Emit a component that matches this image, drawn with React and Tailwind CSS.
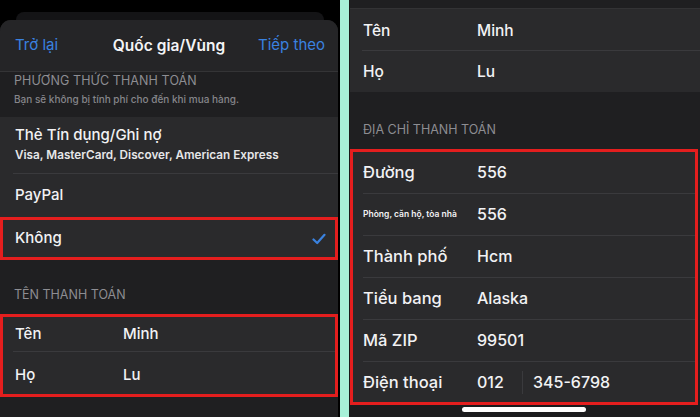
import React from "react";

const Check = () => (
  <svg width="14" height="12" viewBox="0 0 14 12" fill="none">
    <path d="M1.5 6.5 L5.2 10 L12.5 1.8" stroke="#3a82e0" strokeWidth="2.2" strokeLinecap="round" strokeLinejoin="round" />
  </svg>
);

export default function App() {
  return (
    <div className="w-[700px] h-[417px] flex bg-black overflow-hidden font-['Inter','Noto_Sans',sans-serif] antialiased">
      {/* LEFT PHONE */}
      <div className="w-[340px] h-full flex flex-col bg-black">
        <div className="h-[12px] shrink-0" />
        <div className="mx-[16px] h-[8px] shrink-0 rounded-t-[10px] bg-[#141416]" />
        <div className="flex-1 flex flex-col rounded-t-[11px] bg-[#1e1e20] overflow-hidden mr-[2px]">
          {/* nav */}
          <div className="h-[52px] shrink-0 flex items-center justify-between pl-[15px] pr-[13px] bg-[#252527] border-b border-[#343436]">
            <span className="text-[15px] text-[#3a82e0]">Trở lại</span>
            <span className="text-[15.5px] font-semibold text-[#f4f4f6] ml-[22px]">Quốc gia/Vùng</span>
            <span className="text-[15px] text-[#3a82e0]">Tiếp theo</span>
          </div>
          {/* header */}
          <div className="h-[45px] shrink-0 flex flex-col pl-[14px] pt-[1px] bg-[#1f1f21]">
            <div className="text-[12.5px] leading-[16px] text-[#8d8d92] tracking-[0.1px]">PHƯƠNG THỨC THANH TOÁN</div>
            <div className="mt-[3px] text-[10px] leading-[14px] text-[#86868b] font-medium">Bạn sẽ không bị tính phí cho đến khi mua hàng.</div>
          </div>
          {/* rows */}
          <div className="bg-[#2a2a2c] shrink-0">
            <div className="relative h-[57px] pl-[15px] pt-[8px]">
              <div className="text-[15px] leading-[20px] font-medium text-[#f2f2f4]">Thẻ Tín dụng/Ghi nợ</div>
              <div className="mt-[3px] text-[11.75px] leading-[14px] font-semibold text-[#e6e6e8]">Visa, MasterCard, Discover, American Express</div>
              <div className="absolute bottom-0 left-[13px] right-0 h-px bg-[#3a3a3d]" />
            </div>
            <div className="h-[43px] flex items-center pl-[15px] text-[15px] font-medium text-[#f2f2f4]">PayPal</div>
            <div className="h-[43px] flex items-center justify-between pl-[12px] pr-[9px] border-[3px] border-[#e41e1e] text-[15px] font-medium text-[#f2f2f4]">
              <span>Không</span>
              <Check />
            </div>
          </div>
          {/* section 2 header */}
          <div className="h-[54px] shrink-0 flex items-end pl-[14px] pb-[11px] bg-[#1f1f21]">
            <span className="text-[12.5px] leading-[16px] text-[#8d8d92]">TÊN THANH TOÁN</span>
          </div>
          <div className="shrink-0 bg-[#2a2a2c] border-[3px] border-[#e41e1e]">
            <div className="relative h-[35px] flex items-center pl-[12px]">
              <span className="w-[108px] text-[15px] font-medium text-[#f2f2f4]">Tên</span>
              <span className="text-[15px] font-medium text-[#f2f2f4]">Minh</span>
              <div className="absolute bottom-0 left-[10px] right-0 h-px bg-[#3a3a3d]" />
            </div>
            <div className="h-[42px] flex items-center pl-[12px] pt-[4px]">
              <span className="w-[108px] text-[15px] font-medium text-[#f2f2f4]">Họ</span>
              <span className="text-[15px] font-medium text-[#f2f2f4]">Lu</span>
            </div>
          </div>
          <div className="flex-1 bg-[#1f1f21]" />
        </div>
      </div>

      {/* MINT DIVIDER */}
      <div className="w-[9px] h-full bg-[#a8f0d8]" />
      <div className="w-px h-full bg-[#1a1a1a]" />

      {/* RIGHT PHONE */}
      <div className="w-[350px] h-full flex flex-col bg-[#1f1f21]">
        <div className="h-[9px] shrink-0 border-b border-[#333335]" />
        <div className="bg-[#2a2a2c] shrink-0">
          <div className="relative h-[42px] flex items-center pl-[13px] pt-[1px]">
            <span className="w-[114px] text-[15.5px] font-medium text-[#f2f2f4]">Tên</span>
            <span className="text-[15.5px] font-medium text-[#f2f2f4]">Minh</span>
            <div className="absolute bottom-0 left-[12px] right-0 h-px bg-[#3a3a3d]" />
          </div>
          <div className="h-[41px] flex items-center pl-[13px] pt-[1px]">
            <span className="w-[114px] text-[15.5px] font-medium text-[#f2f2f4]">Họ</span>
            <span className="text-[15.5px] font-medium text-[#f2f2f4]">Lu</span>
          </div>
        </div>
        <div className="h-[57px] shrink-0 flex items-end pl-[13px] pb-[11px]">
          <span className="text-[12.5px] leading-[16px] text-[#8d8d92]">ĐỊA CHỈ THANH TOÁN</span>
        </div>
        <div className="shrink-0 mr-[2px] bg-[#2a2a2c] border-[3px] border-[#e41e1e]">
          {[
            ["Đường", "556", false],
            ["Phòng, căn hộ, tòa nhà", "556", true],
            ["Thành phố", "Hcm", false],
            ["Tiểu bang", "Alaska", false],
            ["Mã ZIP", "99501", false],
          ].map(([l, v, small]) => (
            <div key={l} className="relative h-[42px] flex items-center pl-[10px] pb-[2px]">
              <span className={`w-[114px] font-medium text-[#f2f2f4] ${small ? "text-[8.5px] font-semibold text-[#d8d8da]" : "text-[16.5px]"}`}>{l}</span>
              <span className="text-[16px] font-medium text-[#f2f2f4]">{v}</span>
              <div className="absolute bottom-0 left-[10px] right-0 h-px bg-[#3a3a3d]" />
            </div>
          ))}
          <div className="h-[40px] flex items-center pl-[10px]">
            <span className="w-[114px] text-[16.5px] font-medium text-[#f2f2f4]">Điện thoại</span>
            <span className="w-[45px] text-[16px] font-medium text-[#f2f2f4]">012</span>
            <div className="w-px h-[23px] bg-[#3a3a3d] mr-[10px]" />
            <span className="text-[16px] font-medium text-[#f2f2f4]">345-6798</span>
          </div>
        </div>
        <div className="flex-1 flex justify-center pt-[2px] bg-[#1c1c1e]">
          <div className="w-[124px] h-[5px] rounded-full bg-white ml-[-2px]" />
        </div>
      </div>
    </div>
  );
}
